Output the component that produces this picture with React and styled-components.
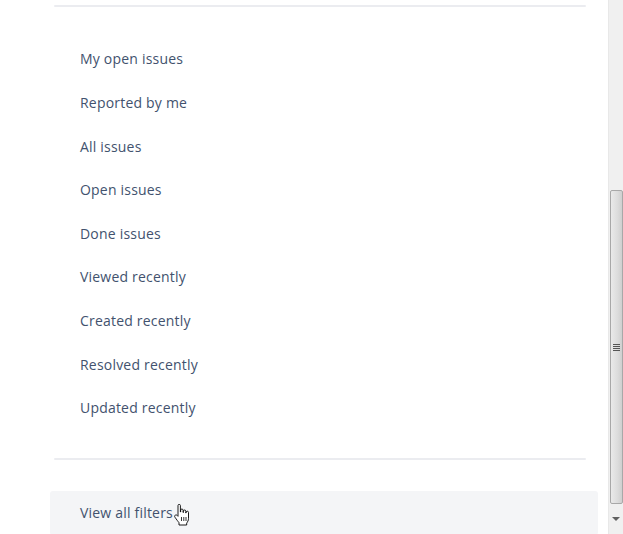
import React from "react";
import styled, {createGlobalStyle} from "styled-components";

const GlobalStyle = createGlobalStyle`
  html, body {
    margin: 0;
    padding: 0;
    height: 100%;
    overflow: hidden;
    background: #fff;
  }
  body {
    font-family: "Open Sans", "Noto Sans", "Liberation Sans", sans-serif;
  }
`;

const Page = styled.div`
  display: flex;
  width: 623px;
  height: 534px;
  overflow: hidden;
`;

const Content = styled.div`
  width: 608px;
  padding: 5px 22px 0 54px;
  box-sizing: border-box;
`;

const Divider = styled.div`
  height: 2px;
  background: #ebecf0;
  border-radius: 1px;
`;

const FilterList = styled.ul`
  list-style: none;
  margin: 0;
  padding: 30px 0 28px 0;
`;

const FilterItem = styled.li`
  height: 43.625px;
  display: flex;
  align-items: center;
  padding-left: 26px;
  font-size: 14px;
  letter-spacing: 0.2px;
  color: #42526e;
  cursor: pointer;
`;

const ViewAllButton = styled.div`
  position: relative;
  margin: 31px -12px 0 -4px;
  height: 44px;
  display: flex;
  align-items: center;
  padding-left: 30px;
  background: #f4f5f7;
  border-radius: 3px;
  font-size: 14px;
  letter-spacing: 0.2px;
  color: #42526e;
`;

const Cursor = styled.svg`
  position: absolute;
  left: 123px;
  top: 13px;
`;

const Scrollbar = styled.div`
  width: 15px;
  background: #f0f0f0;
  display: flex;
  flex-direction: column;
  border-left: 1px solid #e8e8e8;
  box-sizing: border-box;
`;

const Track = styled.div`
  height: ${props => props.size}px;
`;

const Thumb = styled.div`
  height: 314px;
  margin: 0 0 0 1px;
  background: linear-gradient(to right, #eaeaea, #dcdcdc 60%, #cfcfcf);
  border: 1px solid #a8a8a8;
  border-radius: 2px;
  display: flex;
  align-items: center;
  justify-content: center;
  box-sizing: border-box;
`;

const Grip = styled.div`
  width: 7px;
  height: 7px;
  background: repeating-linear-gradient(to bottom, #555 0 1px, transparent 1px 2px);
`;

const ArrowDown = styled.div`
  flex: 1;
  display: flex;
  align-items: center;
  justify-content: center;
  &::after {
    content: "";
    border-left: 4px solid transparent;
    border-right: 4px solid transparent;
    border-top: 4px solid #606060;
  }
`;

const filters = [
    "My open issues",
    "Reported by me",
    "All issues",
    "Open issues",
    "Done issues",
    "Viewed recently",
    "Created recently",
    "Resolved recently",
    "Updated recently",
];

const HandCursor = () => (
    <Cursor width="17" height="22" viewBox="0 0 17 22">
        <path
            d="M5 1.5c0-.8.6-1.2 1.2-1.2s1.2.4 1.2 1.2V8h.3V6.2c0-.8.6-1.2 1.2-1.2s1.2.4 1.2 1.2V8.5h.3V7.2c0-.8.6-1.2 1.2-1.2s1.2.4 1.2 1.2v1.8h.3v-.6c0-.8.6-1.2 1.2-1.2s1.2.4 1.2 1.2v6.1c0 2-1 3.4-1.8 4.6V21H6v-2.3c-.8-1-2.6-3.4-4-5.4-.6-.8-.4-1.7.2-2.1.7-.5 1.5-.3 2.1.4L5 12.3z"
            fill="#fff"
            stroke="#000"
            strokeWidth="0.9"
            strokeLinejoin="round"
        />
        <path d="M8.5 13v4M10.8 13v4M13 13v4" stroke="#000" strokeWidth="0.8"/>
    </Cursor>
);

const App = () => {
    return (
        <>
            <GlobalStyle/>
            <Page>
                <Content>
                    <Divider/>
                    <FilterList>
                        {filters.map(name => (
                            <FilterItem key={name}>{name}</FilterItem>
                        ))}
                    </FilterList>
                    <Divider/>
                    <ViewAllButton>
                        View all filters
                        <HandCursor/>
                    </ViewAllButton>
                </Content>
                <Scrollbar>
                    <Track size={190}/>
                    <Thumb>
                        <Grip/>
                    </Thumb>
                    <ArrowDown/>
                </Scrollbar>
            </Page>
        </>
    );
};

export default App;
